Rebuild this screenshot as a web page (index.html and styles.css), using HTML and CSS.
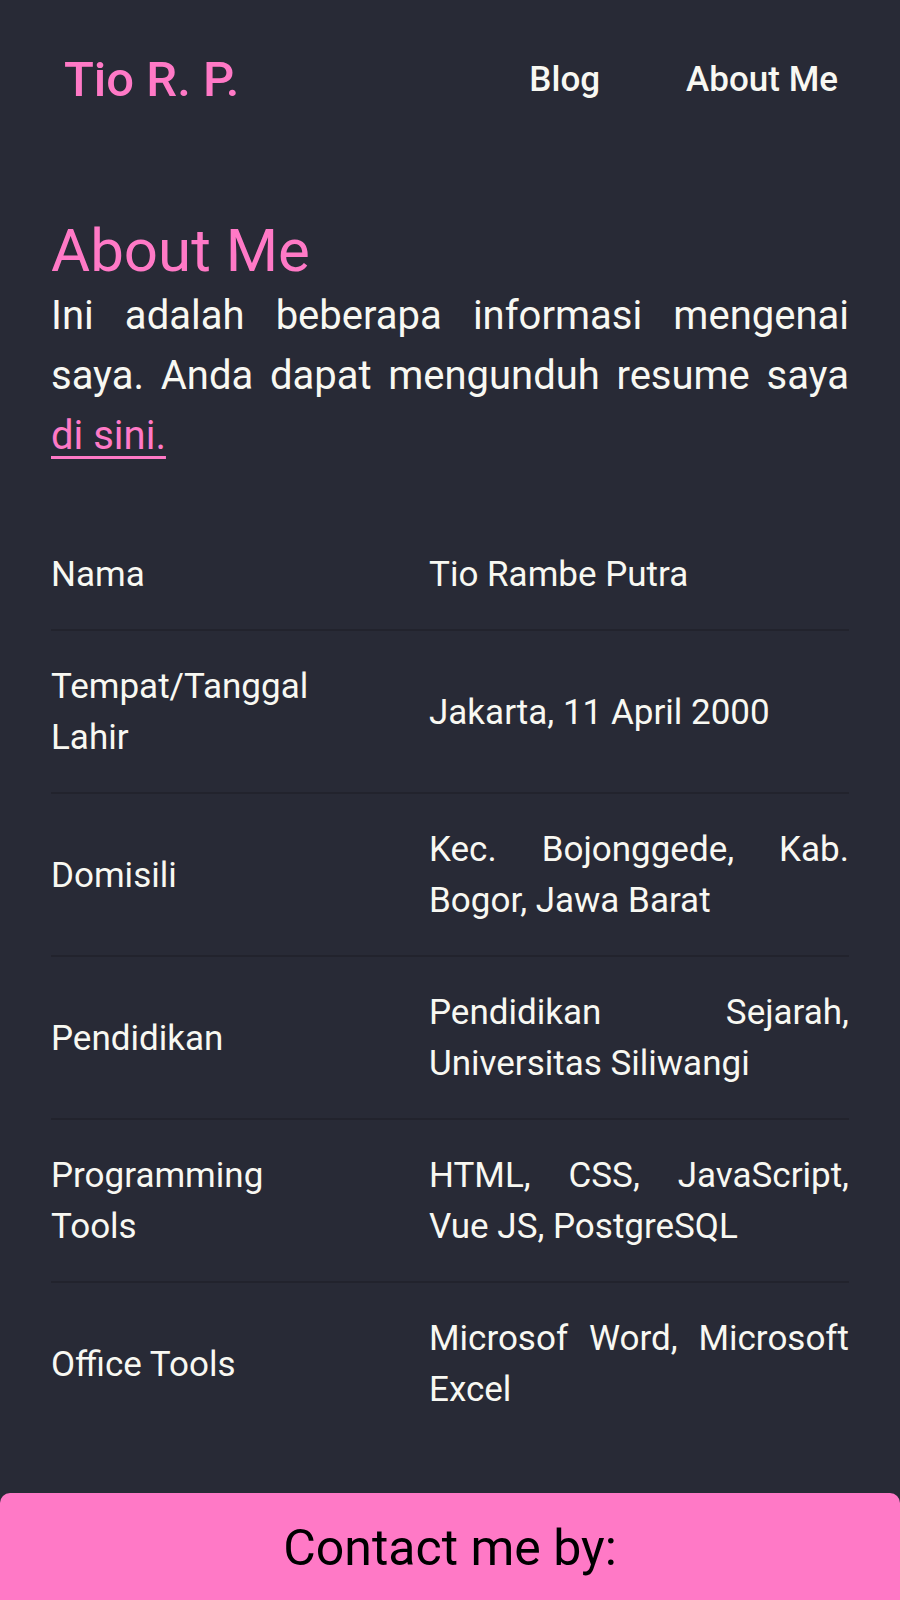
FILE: index.html
```html
<!DOCTYPE html>
<html lang="id">
<head>
<meta charset="utf-8">
<title>About Me - Tio R. P.</title>
<link rel="stylesheet" href="styles.css">
</head>
<body>
<header class="site-header">
  <a class="logo" href="#">Tio R. P.</a>
  <nav class="nav">
    <a class="nav-link" href="#">Blog</a>
    <a class="nav-link" href="#">About Me</a>
  </nav>
</header>
<main class="content">
  <h1 class="title">About Me</h1>
  <p class="intro">Ini adalah beberapa informasi mengenai saya. Anda dapat mengunduh resume saya <a class="link" href="#">di sini.</a></p>
  <div class="info">
    <div class="row"><div class="label">Nama</div><div class="value">Tio Rambe Putra</div></div>
    <div class="row"><div class="label">Tempat/Tanggal Lahir</div><div class="value">Jakarta, 11 April 2000</div></div>
    <div class="row"><div class="label">Domisili</div><div class="value">Kec. Bojonggede, Kab. Bogor, Jawa Barat</div></div>
    <div class="row"><div class="label">Pendidikan</div><div class="value">Pendidikan Sejarah, Universitas Siliwangi</div></div>
    <div class="row"><div class="label">Programming Tools</div><div class="value">HTML, CSS, JavaScript, Vue JS, PostgreSQL</div></div>
    <div class="row last"><div class="label">Office Tools</div><div class="value">Microsof Word, Microsoft Excel</div></div>
  </div>
</main>
<footer class="footer">
  <h2 class="footer-title">Contact me by:</h2>
</footer>
</body>
</html>
```

FILE: styles.css
```css
* { box-sizing: border-box; }
html, body { margin: 0; padding: 0; }
body {
  background: #282a36;
  color: #f8f8f2;
  font-family: Roboto, "Noto Sans", "Liberation Sans", sans-serif;
  min-height: 1600px;
}
a { text-decoration: none; }
.site-header {
  display: flex;
  align-items: flex-start;
  justify-content: space-between;
  padding: 51px 62px 0 64px;
  height: 160px;
}
.logo {
  color: #ff79c6;
  font-size: 49px;
  font-weight: 500;
  line-height: 58px;
}
.nav {
  display: flex;
  gap: 86px;
  padding-top: 8px;
}
.nav-link {
  color: #f8f8f2;
  font-size: 35px;
  font-weight: 500;
  line-height: 42px;
}
.content {
  padding: 56px 51px 0 51px;
}
.title {
  margin: 0;
  color: #ff79c6;
  font-size: 60px;
  font-weight: 400;
  line-height: 70px;
}
.intro {
  margin: 0;
  font-size: 40px;
  line-height: 60px;
  text-align: justify;
}
.link {
  color: #ff79c6;
  text-decoration: underline;
  text-decoration-thickness: 3px;
  text-underline-offset: 7px;
}
.info {
  margin-top: 53px;
  font-size: 35px;
  line-height: 51px;
}
.row {
  display: grid;
  grid-template-columns: 280px 1fr;
  column-gap: 98px;
  align-items: center;
  padding: 30px 0 29px;
  border-bottom: 2px solid #22232d;
}
.row.last { border-bottom: none; }
.value { text-align: justify; }
.footer {
  margin-top: 49px;
  background: #ff79c6;
  border-radius: 10px 10px 0 0;
  height: 120px;
  padding-top: 25px;
  text-align: center;
}
.footer-title {
  margin: 0;
  color: #000;
  font-size: 50px;
  font-weight: 400;
  line-height: 60px;
}
```
